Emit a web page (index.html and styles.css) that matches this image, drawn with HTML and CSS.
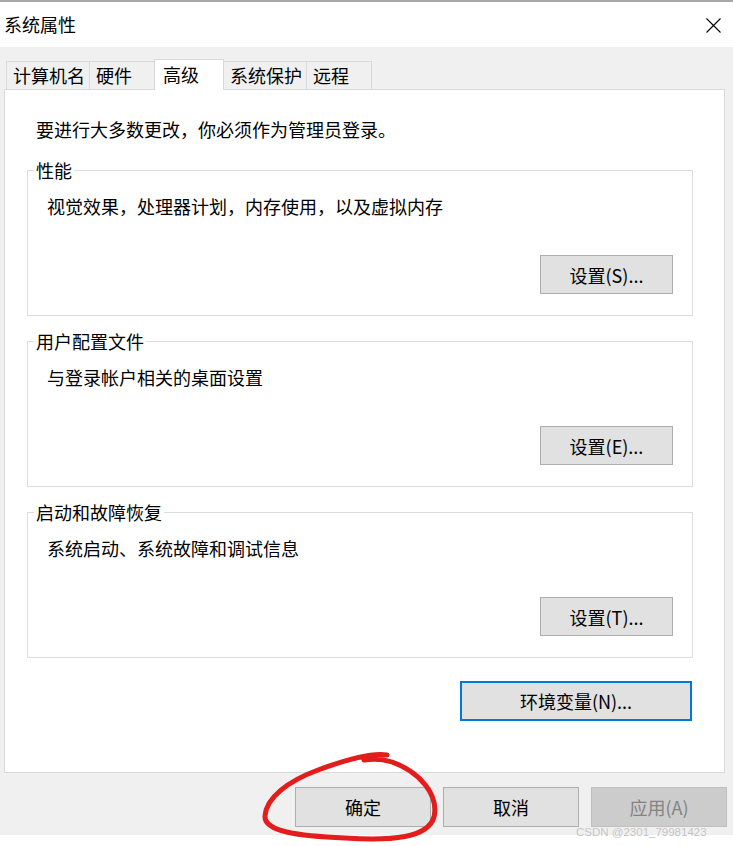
FILE: index.html
```html
<!DOCTYPE html>
<html lang="zh-CN">
<head>
<meta charset="utf-8">
<title>系统属性</title>
<link rel="stylesheet" href="styles.css">
</head>
<body>
<div class="window">
  <div class="titlebar">
    <span class="title">系统属性</span>
    <svg class="close" width="15" height="15" viewBox="0 0 15 15"><path d="M0.5 0.5 L14.5 14.5 M14.5 0.5 L0.5 14.5" stroke="#000" stroke-width="1.1" fill="none"/></svg>
  </div>
  <div class="main">
    <div class="tabs">
      <div class="tab">计算机名</div>
      <div class="tab">硬件</div>
      <div class="tab selected">高级</div>
      <div class="tab">系统保护</div>
      <div class="tab">远程</div>
    </div>
    <div class="panel">
      <div class="intro">要进行大多数更改，你必须作为管理员登录。</div>
      <div class="group">
        <div class="group-label">性能</div>
        <div class="group-desc">视觉效果，处理器计划，内存使用，以及虚拟内存</div>
        <button class="btn group-btn">设置(S)...</button>
      </div>
      <div class="group">
        <div class="group-label">用户配置文件</div>
        <div class="group-desc">与登录帐户相关的桌面设置</div>
        <button class="btn group-btn">设置(E)...</button>
      </div>
      <div class="group">
        <div class="group-label">启动和故障恢复</div>
        <div class="group-desc">系统启动、系统故障和调试信息</div>
        <button class="btn group-btn">设置(T)...</button>
      </div>
      <button class="btn env-btn">环境变量(N)...</button>
    </div>
    <div class="footer">
      <button class="btn foot-btn">确定</button>
      <button class="btn foot-btn">取消</button>
      <button class="btn foot-btn disabled">应用(A)</button>
    </div>
  </div>
  <div class="bottomstrip"></div>
  <svg class="annotation" width="733" height="846" viewBox="0 0 733 846">
    <path d="M387 755 C 372 752, 345 760, 318 770 C 288 781, 266 798, 265 816 C 264 832, 300 836, 345 838 C 392 841, 428 838, 434 817 C 439 795, 420 772, 392 762 C 380 758, 370 759, 364 760" stroke="#e31c1c" stroke-width="5" fill="none" stroke-linecap="round" stroke-linejoin="round"/>
  </svg>
  <div class="watermark">CSDN @2301_79981423</div>
</div>
</body>
</html>
```

FILE: styles.css
```css
* { box-sizing: border-box; }

body {
  margin: 0;
  font-family: "Noto Sans CJK SC", "Noto Sans", sans-serif;
  font-size: 18px;
  color: #000;
  background: #fff;
}

.window {
  position: relative;
  width: 733px;
  height: 846px;
  display: flex;
  flex-direction: column;
  border-top: 2px solid #a8a8a8;
}

.titlebar {
  height: 45px;
  flex: none;
  background: #fff;
  display: flex;
  align-items: center;
  justify-content: space-between;
  padding: 0 12px 0 4px;
}

.title {
  line-height: 24px;
  margin-top: -2px;
}

.close {
  display: block;
  margin-top: 1px;
}

.main {
  flex: 1;
  background: #f0f0f0;
  display: flex;
  flex-direction: column;
  padding: 12px 8px 0 4px;
}

.tabs {
  height: 30px;
  display: flex;
  align-items: flex-end;
  padding-left: 2px;
}

.tab {
  height: 28px;
  min-width: 66px;
  padding: 0 4px 0 6px;
  line-height: 27px;
  border: 1px solid #d9d9d9;
  border-bottom: none;
  margin-right: -1px;
  background: #f0f0f0;
  white-space: nowrap;
}

.tab.selected {
  position: relative;
  z-index: 1;
  width: 70px;
  height: 31px;
  margin-bottom: -1px;
  padding-left: 8px;
  background: #fff;
  line-height: 28px;
}

.panel {
  height: 684px;
  flex: none;
  border: 1px solid #d9d9d9;
  background: #fff;
  display: flex;
  flex-direction: column;
  padding: 27px 31px 0 22px;
}

.intro {
  line-height: 24px;
  margin-left: 9px;
  margin-bottom: 29px;
}

.group {
  height: 146px;
  flex: none;
  border: 1px solid #dcdcdc;
  display: flex;
  flex-direction: column;
  padding: 0 19px 21px 6px;
  margin-bottom: 25px;
}

.group-label {
  align-self: flex-start;
  background: #fff;
  padding: 0 2px;
  line-height: 24px;
  margin-top: -13px;
}

.group-desc {
  line-height: 24px;
  margin: 12px 0 0 13px;
}

.btn {
  font-family: inherit;
  font-size: 18px;
  color: #000;
  background: #e1e1e1;
  border: 1px solid #adadad;
  padding: 0;
  line-height: 24px;
}

.group-btn {
  margin-top: auto;
  align-self: flex-end;
  width: 133px;
  height: 39px;
}

.env-btn {
  align-self: flex-end;
  width: 232px;
  height: 40px;
  margin-top: -2px;
  margin-right: 1px;
  border: 2px solid #0078d7;
}

.footer {
  display: flex;
  justify-content: flex-end;
  gap: 12px;
  margin-top: 14px;
  margin-right: -2px;
}

.foot-btn {
  width: 136px;
  height: 40px;
}

.foot-btn.disabled {
  background: #cccccc;
  border-color: #bfbfbf;
  color: #838383;
}

.bottomstrip {
  height: 11px;
  flex: none;
  background: #fff;
}

.annotation {
  position: absolute;
  left: 0;
  top: -2px;
  pointer-events: none;
}

.watermark {
  position: absolute;
  left: 576px;
  top: 822px;
  font-family: "Liberation Sans", Arial, sans-serif;
  font-size: 11.5px;
  line-height: 16px;
  color: #c2c2c2;
  text-shadow: 0 0 1px rgba(255, 255, 255, 0.9);
}
```
